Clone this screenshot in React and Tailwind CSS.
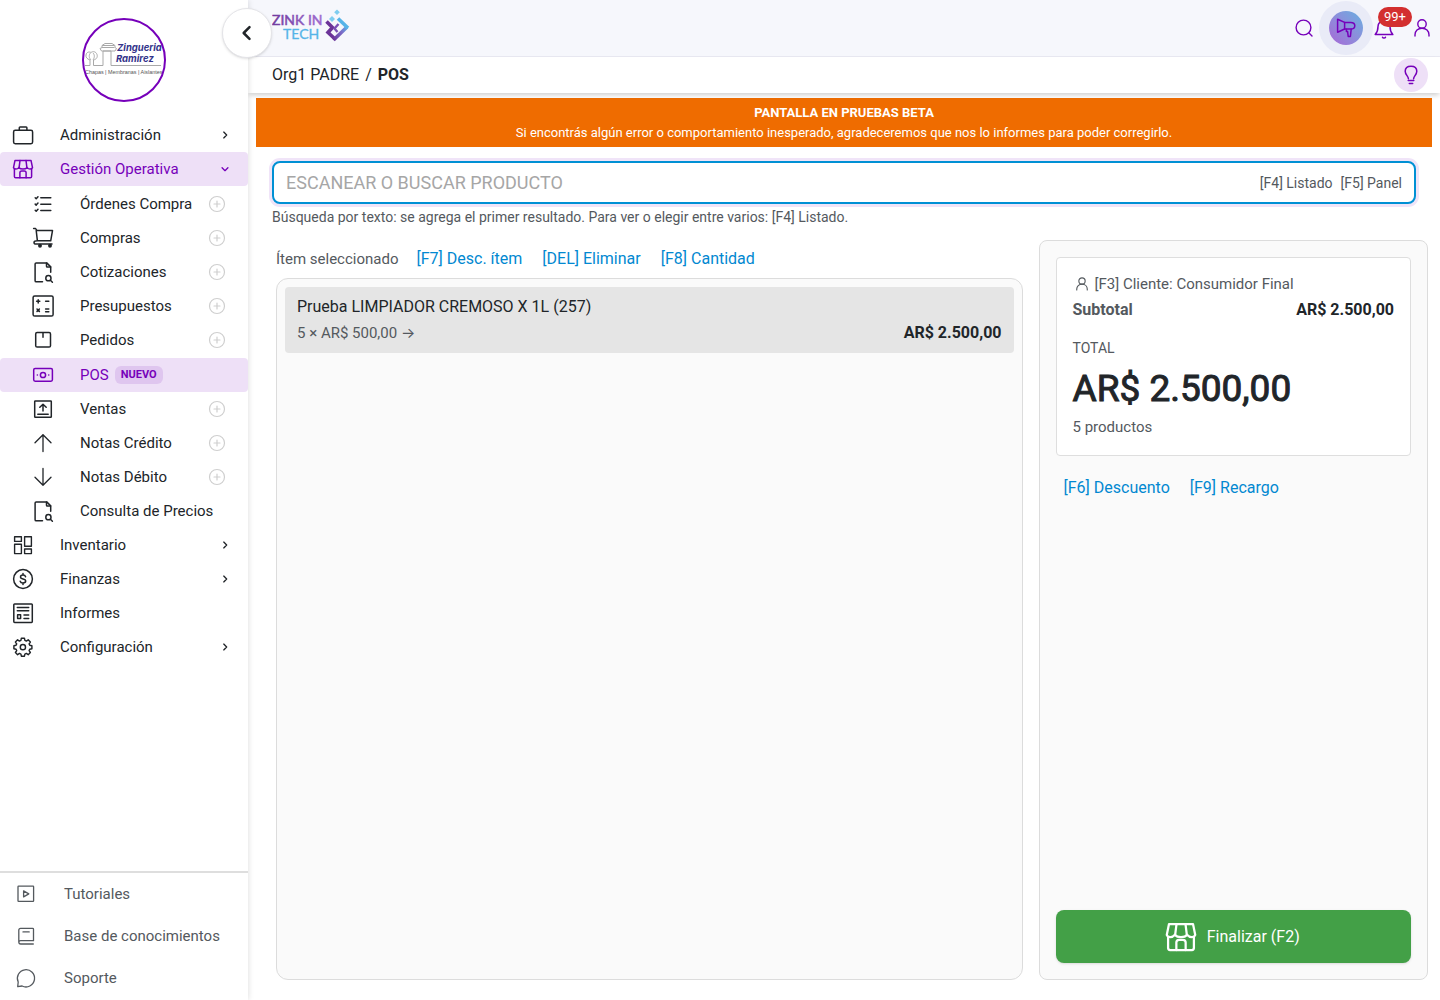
import { useState } from "react";
import clsx from "clsx";

const Svg = ({ className = "size-6", sw = 1.5, children }) => (
  <svg
    viewBox="0 0 24 24"
    className={clsx("shrink-0", className)}
    fill="none"
    stroke="currentColor"
    strokeWidth={sw}
    strokeLinecap="round"
    strokeLinejoin="round"
    aria-hidden="true"
  >
    {children}
  </svg>
);

const StoreIcon = (props) => (
  <Svg {...props}>
    <path d="M4 3.4h16l1.500 7.200c-.4 1-1.400 1.500-2.500 1.500s-2-.5-2.800-1.500c-1 1-2.600 1.500-4.200 1.500s-3.200-.5-4.200-1.500C7 11.600 6.100 12.100 5 12.100s-2.100-.5-2.500-1.500z" />
    <path d="m9 3.400-.9 7.200M15 3.400l.9 7.200" />
    <path d="M3.400 12v7.400c0 .8.5 1.300 1.300 1.300h14.600c.8 0 1.300-.5 1.300-1.300V12" />
    <path d="M8.900 20.700v-5c0-1.100.7-1.800 1.800-1.800h2.600c1.100 0 1.800.7 1.800 1.800v5" />
  </Svg>
);

const BriefcaseIcon = () => (
  <Svg>
    <rect x="2.6" y="7.3" width="19" height="13.4" rx="1.6" />
    <path d="M8.3 7.2V4.8c0-.5.3-.8.8-.8h6c.5 0 .8.3.8.8v2.4" />
  </Svg>
);

const ChecklistIcon = () => (
  <Svg>
    <path d="M9.8 5.8h10M9.8 12.2h10M9.8 18.4h10M4.2 5.7l1 1 1.8-2M4.2 12.1l1 1 1.8-2M4.2 18.3l1 1 1.8-2" />
  </Svg>
);

const CartIcon = () => (
  <Svg>
    <path d="M2.6 2.6h2l1.5 2h15.4l-1.8 10.2H6.4L5.2 4.5M6.4 14.8c-2.4 0-3.4.5-3.4 1.6s.8 1.6 2 1.6h16" />
    <circle cx="9" cy="19.8" r="1.2" fill="currentColor" />
    <circle cx="19" cy="19.8" r="1.2" fill="currentColor" />
  </Svg>
);

const FileSearchIcon = () => (
  <Svg>
    <path d="M11.5 21.8H5.2c-.7 0-1.1-.4-1.1-1.1V4c0-.7.4-1.1 1.1-1.1h10.5l4 4v5.4" />
    <path d="M15.5 3v3.3c0 .5.3.8.8.8h3.3" />
    <circle cx="17.4" cy="18.2" r="2.6" />
    <path d="m19.4 20.2 2 2" />
  </Svg>
);

const CalcIcon = () => (
  <Svg>
    <rect x="2.1" y="1.9" width="20" height="20.2" rx="1.6" />
    <path d="M5.6 7.3h3.2M7.2 5.7v3.2M14.6 7.3h3.2M6 15l2.4 2.4M8.4 15 6 17.4M14.6 15h3.2M14.6 17.7h3.2" />
  </Svg>
);

const BoxIcon = () => (
  <Svg>
    <rect x="4.7" y="4.5" width="14.8" height="14.6" rx="1.4" />
    <path d="M12 4.7v4.6" />
  </Svg>
);

const CashIcon = () => (
  <Svg>
    <rect x="2.7" y="5.6" width="18.7" height="12.6" rx="1.4" />
    <circle cx="12" cy="12" r="2.6" />
    <path d="M6.3 12h.1M17.7 12h.1" />
  </Svg>
);

const UploadBoxIcon = () => (
  <Svg>
    <rect x="3.7" y="3.9" width="16.6" height="16.4" rx=".6" />
    <path d="M12 14V7.3M8.8 10.3 12 7.2l3.2 3.1M6.8 17.2h10.4" />
  </Svg>
);

const ArrowUpIcon = () => (
  <Svg sw={1.3}>
    <path d="M12 20.5V3.7M4 11.8l8-8.1 8 8.1" />
  </Svg>
);

const ArrowDownIcon = () => (
  <Svg sw={1.3}>
    <path d="M12 3.5v16.8M4 12.2l8 8.1 8-8.1" />
  </Svg>
);

const DashboardIcon = () => (
  <Svg sw={1.4}>
    <rect x="3.6" y="3.8" width="6.8" height="4.6" />
    <rect x="3.6" y="11.2" width="6.8" height="9.4" />
    <rect x="13.6" y="3.8" width="6.8" height="9.4" />
    <rect x="13.6" y="16" width="6.8" height="4.6" />
  </Svg>
);

const DollarIcon = () => (
  <Svg>
    <circle cx="12" cy="12" r="9.4" />
    <path d="M12 6.4v1.5M12 16.1v1.5M14.6 9.7c-.3-1.1-1.2-1.7-2.6-1.7-1.5 0-2.5.7-2.5 1.9 0 2.9 5.2 1.2 5.2 4.2 0 1.2-1.1 1.9-2.7 1.9-1.5 0-2.5-.6-2.8-1.8" />
  </Svg>
);

const ReportIcon = () => (
  <Svg>
    <rect x="2.8" y="2.9" width="18.5" height="18.5" rx=".8" />
    <path d="M6.3 6.5h11.4M6.3 9.7h11.4M13 14h4.7M13 17.6h4.7" />
    <rect x="6.6" y="13.8" width="3" height="3.8" />
  </Svg>
);

const GearIcon = () => (
  <Svg sw={1.6}>
    <g transform="translate(1.1 .5) scale(.9)">
      <path d="M10.3 3h3.4l.5 2.5 1.6.7 2.1-1.4 2.4 2.4-1.4 2.1.7 1.6 2.4.4v3.4l-2.4.5-.7 1.6 1.4 2.1-2.4 2.4-2.1-1.4-1.6.7-.5 2.4h-3.4l-.5-2.4-1.6-.7-2.1 1.4-2.4-2.4 1.4-2.1-.7-1.6-2.4-.5v-3.4l2.4-.4.7-1.6-1.4-2.1 2.4-2.4 2.1 1.4 1.6-.7z" />
      <circle cx="12" cy="13" r="2.9" />
    </g>
  </Svg>
);

const PlayBoxIcon = () => (
  <Svg sw={1.3}>
    <rect x="4" y="4.2" width="15.6" height="15.2" rx=".6" />
    <path d="M9.6 8.9v6l5.2-3z" />
  </Svg>
);

const BookIcon = () => (
  <Svg sw={1.3}>
    <path d="M19.5 16.7V5.2c0-.5-.3-.8-.8-.8H6.6c-1.2 0-1.8.7-1.8 1.8v11.9c0 1.2.7 1.9 1.9 1.9h12.6M4.8 18c.2-.9.8-1.3 1.8-1.3h12.9M9 7.9h6.2" />
  </Svg>
);

const ChatIcon = () => (
  <Svg sw={1.3}>
    <path d="M3.7 20.7 4.2 16A8.6 8.6 0 1 1 8.1 20z" />
  </Svg>
);

const UserIcon = (props) => (
  <Svg {...props}>
    <circle cx="12" cy="8" r="4.2" />
    <path d="M5 20v-1.2c0-3.7 2.9-6.6 7-6.6s7 2.9 7 6.6V20" />
  </Svg>
);

const SearchIcon = () => (
  <Svg sw={1.4}>
    <circle cx="11.5" cy="11.5" r="7.4" />
    <path d="m17 17 3 3" />
  </Svg>
);

const MegaphoneIcon = () => (
  <Svg sw={1.5}>
    <path d="M3.6 3.2v13l7-3.2V6.4z" />
    <path d="M10.6 6.4h6.2c2.4 0 4 1.3 4 3.3s-1.600 3.300-4 3.300h-6.200" />
    <path d="M12.400 13.200v2.400h1.200l.6 4.800h2.200l.8-7.200" />
  </Svg>
);

const BellIcon = () => (
  <Svg sw={1.5}>
    <path d="M6 10.400a6 6 0 0 1 12 0c0 3.400.4 5.400 2.800 8.200H3.200C5.600 15.800 6 13.800 6 10.400zM10.500 21.200c.2.500.7.700 1.500.7s1.300-.2 1.500-.7" />
  </Svg>
);

const BulbIcon = () => (
  <Svg sw={1.5}>
    <path d="M9.400 15.800c0-2.600-3.200-4-3.200-7.600 0-3.300 2.400-5 5.800-5s5.800 1.700 5.800 5c0 3.600-3.200 5-3.200 7.600M9.200 17.600h5.600M10.300 20.400h3.400" />
  </Svg>
);

const ChevronIcon = ({ className, sw = 3.2, d = "m9 5 7 7-7 7" }) => (
  <Svg className={className} sw={sw}>
    <path d={d} />
  </Svg>
);

const PlusCircleIcon = () => (
  <Svg className="size-[18px]" sw={1.6}>
    <circle cx="12" cy="12" r="10" />
    <path d="M12 8v8M8 12h8" />
  </Svg>
);

const CompanyLogo = () => (
  <svg viewBox="0 0 84 84" className="size-[84px]" role="img" aria-label="Zingueria Ramirez">
    <defs>
      <clipPath id="logoClip">
        <circle cx="42" cy="42" r="41" />
      </clipPath>
    </defs>
    <g clipPath="url(#logoClip)">
      <g fill="none" stroke="#a9a9a9" strokeWidth="1">
        <path d="M3 47.5h5V42c-3-1-4.500-3-4-5 .5-3 3-3.500 5-2.500 2-1.500 5-1 6 2 1 3-1 5-3.500 5.500v5.500H21V33h8v14.500h50M8.500 35c-2 2-1.500 5 .5 7M11 35c2 2 1.500 5 0 7" />
        <path d="M19.500 33 18 30.500l2-1v-2l3-2h7l3 2v2l1.500 1-1.500 2.500zM20 29.500h12.500M20 27.500h12.500" />
      </g>
      <g
        fontFamily="Inter, 'Liberation Sans', sans-serif"
        fontWeight="700"
        fontStyle="italic"
        fontSize="9.5"
        fill="#33338a"
      >
        <text x="35" y="33">Zingueria</text>
        <text x="34" y="44">Ramirez</text>
      </g>
      <text x="3" y="56" fontFamily="'Liberation Sans', sans-serif" fontSize="5.4" fill="#555">
        Chapas | Membranas | Aislantes
      </text>
    </g>
    <circle cx="42" cy="42" r="41" fill="none" stroke="#7600ba" strokeWidth="2" />
  </svg>
);

const BrandLogo = () => (
  <svg viewBox="0 0 80 34" className="h-[34px] w-20" role="img" aria-label="Zink in Tech">
    <defs>
      <linearGradient id="brandText" gradientUnits="userSpaceOnUse" x1="0" x2="50">
        <stop offset="0" stopColor="#6f3a9e" />
        <stop offset="1" stopColor="#a06bd0" />
      </linearGradient>
      <linearGradient id="brandMark" gradientUnits="userSpaceOnUse" x1="60" y1="30" x2="75" y2="17">
        <stop offset="0" stopColor="#6b3398" />
        <stop offset="0.6" stopColor="#7b6cc8" />
        <stop offset="1" stopColor="#55b4e8" />
      </linearGradient>
    </defs>
    <g fontFamily="Lato, sans-serif" fontSize="14">
      <text x="0" y="15.5" fill="url(#brandText)" stroke="url(#brandText)" strokeWidth="0.5">ZINK IN</text>
      <text x="11" y="30" fill="#55b4e8" stroke="#55b4e8" strokeWidth="0.3">TECH</text>
    </g>
    <g fill="none" strokeWidth="3.6">
      <path d="m54.500 12.500 6 6-4.500 5 7 6.500" stroke="#6b3398" />
      <path d="m61.500 31 13.500-13" stroke="url(#brandMark)" />
      <path d="m66 9.500 10 9.500" stroke="#55b4e8" />
      <path d="m66.500 15-4 4.500 3 3.500" stroke="#7b4fb5" strokeWidth="2.4" />
    </g>
    <g fill="#7fcdf0">
      <path d="m65 .5 2.800 2.800L65 6.100l-2.800-2.800z" />
      <path d="m60 7 3 3-3 3-3-3z" />
    </g>
  </svg>
);

const subItems = [
  { label: "Órdenes Compra", icon: ChecklistIcon, add: true },
  { label: "Compras", icon: CartIcon, add: true },
  { label: "Cotizaciones", icon: FileSearchIcon, add: true },
  { label: "Presupuestos", icon: CalcIcon, add: true },
  { label: "Pedidos", icon: BoxIcon, add: true },
  { label: "POS", icon: CashIcon, active: true, badge: "NUEVO" },
  { label: "Ventas", icon: UploadBoxIcon, add: true },
  { label: "Notas Crédito", icon: ArrowUpIcon, add: true },
  { label: "Notas Débito", icon: ArrowDownIcon, add: true },
  { label: "Consulta de Precios", icon: FileSearchIcon },
];

const menu = [
  { label: "Administración", icon: BriefcaseIcon, arrow: true },
  { label: "Gestión Operativa", icon: StoreIcon, arrow: true, items: subItems },
  { label: "Inventario", icon: DashboardIcon, arrow: true },
  { label: "Finanzas", icon: DollarIcon, arrow: true },
  { label: "Informes", icon: ReportIcon },
  { label: "Configuración", icon: GearIcon, arrow: true },
];

const helpLinks = [
  { label: "Tutoriales", icon: PlayBoxIcon },
  { label: "Base de conocimientos", icon: BookIcon },
  { label: "Soporte", icon: ChatIcon },
];

const SubItem = ({ item }) => (
  <li
    className={clsx(
      "flex h-[34px] items-center rounded pr-[22px]",
      item.active && "mt-px bg-[#eee0f7] text-[#7600ba]"
    )}
  >
    <a href="#" className="flex flex-1 items-center pl-[31px] whitespace-nowrap">
      <item.icon />
      <span className="ml-[25px]">{item.label}</span>
      {item.badge && (
        <span className="ml-1.5 rounded-md bg-[#dfc6ef] px-1.5 text-[11px] leading-[18px] font-bold">
          {item.badge}
        </span>
      )}
    </a>
    {item.add && (
      <button type="button" aria-label={`Agregar ${item.label}`} className="text-[#cfcfcf]">
        <PlusCircleIcon />
      </button>
    )}
  </li>
);

const Sidebar = ({ onToggle }) => {
  const [open, setOpen] = useState("Gestión Operativa");

  return (
    <aside className="relative z-20 flex w-[248px] shrink-0 flex-col bg-white shadow-[0_0_6px_rgba(0,0,0,0.15)]">
      <div className="flex justify-center pt-[18px] pb-4">
        <CompanyLogo />
      </div>
      <button
        type="button"
        aria-label="Contraer menú"
        onClick={onToggle}
        className="absolute top-2 -right-6 flex size-[50px] items-center justify-center rounded-full border border-[#e4e4e8] bg-white shadow-sm"
      >
        <ChevronIcon className="size-5" sw={3} d="m15 5-7 7 7 7" />
      </button>

      <nav className="flex-1 text-[15px]">
        <ul>
          {menu.map((item) => {
            const isOpen = open === item.label && item.items;
            return (
              <li key={item.label}>
                <button
                  type="button"
                  onClick={() => setOpen(isOpen ? "" : item.label)}
                  className={clsx(
                    "flex h-[34px] w-full items-center rounded pr-[18px] pl-[11px]",
                    isOpen && "bg-[#eee0f7] text-[#7600ba]"
                  )}
                >
                  <item.icon />
                  <span className="ml-[25px] flex-1 text-left">{item.label}</span>
                  {item.arrow && (
                    <ChevronIcon className="size-2.5" d={isOpen ? "m5 9 7 7 7-7" : "m9 5 7 7-7 7"} />
                  )}
                </button>
                {isOpen && (
                  <ul className="pt-px">
                    {item.items.map((sub) => (
                      <SubItem key={sub.label} item={sub} />
                    ))}
                  </ul>
                )}
              </li>
            );
          })}
        </ul>
      </nav>

      <ul className="border-t-2 border-[#dedede] pb-px text-[15px] text-[#54595e]">
        {helpLinks.map((link) => (
          <li key={link.label}>
            <a href="#" className="flex h-[42px] items-center pl-3.5">
              <link.icon />
              <span className="ml-[26px]">{link.label}</span>
            </a>
          </li>
        ))}
      </ul>
    </aside>
  );
};

const TopBar = () => (
  <header className="flex h-[57px] items-center justify-between border-b border-[#e9e9f2] bg-[#f6f7fc] pr-1.5 pl-6">
    <a href="#" aria-label="Inicio" className="-mt-1">
      <BrandLogo />
    </a>
    <div className="flex items-center gap-3.5 text-[#7600ba]">
      <button type="button" aria-label="Buscar" className="mr-1">
        <SearchIcon />
      </button>
      <button
        type="button"
        aria-label="Novedades"
        className="-mx-[5px] flex size-[34px] items-center justify-center rounded-full bg-linear-to-tr from-[#a566d6] to-[#62afe0] shadow-[0_0_0_10px_#e9ebf7]"
      >
        <MegaphoneIcon />
      </button>
      <button type="button" aria-label="Notificaciones" className="relative">
        <BellIcon />
        <span className="absolute -top-[9px] left-1.5 rounded-full bg-[#d32f2f] px-1.5 text-[13px] leading-5 text-white">
          99+
        </span>
      </button>
      <button type="button" aria-label="Perfil">
        <UserIcon sw={1.4} />
      </button>
    </div>
  </header>
);

const Breadcrumb = () => (
  <div className="relative z-10 flex h-9 items-center justify-between bg-white pr-3 pl-6 shadow-[0_3px_5px_-1px_rgba(0,0,0,0.2)]">
    <nav aria-label="Ruta" className="flex gap-1.5">
      <a href="#">Org1 PADRE</a>
      <span>/</span>
      <span className="font-bold">POS</span>
    </nav>
    <button
      type="button"
      aria-label="Ayuda"
      className="flex size-[34px] items-center justify-center rounded-full bg-[#eee0f7] text-[#7600ba]"
    >
      <BulbIcon />
    </button>
  </div>
);

const LinkButton = ({ children }) => (
  <button type="button" className="text-base text-[#0288d1]">
    {children}
  </button>
);

const SearchBox = () => {
  const [query, setQuery] = useState("");

  return (
    <div className="px-4 pt-3.5">
      <div className="flex h-[43px] items-center rounded-lg border-2 border-[#0090d4] bg-white px-3 shadow-[0_0_0_3px_#f0e4f8]">
        <input
          type="text"
          aria-label="Escanear o buscar producto"
          placeholder="ESCANEAR O BUSCAR PRODUCTO"
          value={query}
          onChange={(e) => setQuery(e.target.value)}
          className="min-w-0 flex-1 text-lg outline-none placeholder:text-[#a6a6a6]"
        />
        <div className="flex gap-2 text-sm text-[#54595e]">
          <span>[F4] Listado</span>
          <span>[F5] Panel</span>
        </div>
      </div>
      <p className="mt-1 text-sm leading-[18px] text-[#54595e]">
        Búsqueda por texto: se agrega el primer resultado. Para ver o elegir entre varios: [F4] Listado.
      </p>
    </div>
  );
};

const ItemsPanel = () => (
  <section className="flex flex-col">
    <div className="flex h-[38px] items-center gap-5">
      <span className="-mr-0.5 text-[15px] text-[#54595e]">Ítem seleccionado</span>
      <LinkButton>[F7] Desc. ítem</LinkButton>
      <LinkButton>[DEL] Eliminar</LinkButton>
      <LinkButton>[F8] Cantidad</LinkButton>
    </div>
    <div className="flex-1 rounded-xl border border-[#dcdcdc] bg-[#fafafa] p-2">
      <div className="rounded-sm bg-[#e5e5e5] px-3 py-2">
        <p className="leading-6">Prueba LIMPIADOR CREMOSO X 1L (257)</p>
        <div className="mt-0.5 flex items-center justify-between leading-6">
          <span className="text-[15px] text-[#54595e]">
            5 × AR$ 500,00 <span className="font-['Inter',sans-serif]">→</span>
          </span>
          <span className="font-bold">AR$ 2.500,00</span>
        </div>
      </div>
    </div>
  </section>
);

const SummaryPanel = () => (
  <section className="flex flex-col rounded-lg border border-[#dcdcdc] bg-[#fafafa] p-4">
    <div className="rounded border border-[#dedede] bg-white p-4">
      <button type="button" className="flex h-5 items-center gap-1 text-[15px] text-[#54595e]">
        <UserIcon className="size-[18px]" />
        [F3] Cliente: Consumidor Final
      </button>
      <div className="mt-1 flex justify-between font-bold">
        <span className="text-[#54595e]">Subtotal</span>
        <span>AR$ 2.500,00</span>
      </div>
      <p className="mt-4 text-sm leading-5 text-[#54595e]">TOTAL</p>
      <p className="mt-2 text-[37px] leading-[46px] [-webkit-text-stroke:1px]">AR$ 2.500,00</p>
      <p className="mt-1 text-[15px] leading-[23px] text-[#54595e]">5 productos</p>
    </div>
    <div className="mt-5 flex gap-5 px-2">
      <LinkButton>[F6] Descuento</LinkButton>
      <LinkButton>[F9] Recargo</LinkButton>
    </div>
    <button
      type="button"
      className="mt-auto flex h-[53px] items-center justify-center gap-2 rounded-lg bg-[#43a047] pr-1 text-base text-white shadow-sm"
    >
      <StoreIcon className="size-9" />
      Finalizar (F2)
    </button>
  </section>
);

export default function App() {
  const [showMenu, setShowMenu] = useState(true);

  return (
    <div className="flex min-h-screen bg-white font-['Roboto',sans-serif] text-[#212529]">
      {showMenu && <Sidebar onToggle={() => setShowMenu(false)} />}
      <div className="flex min-w-0 flex-1 flex-col">
        <TopBar />
        <Breadcrumb />
        <main className="flex flex-1 flex-col px-2 pt-[5px] pb-5">
          <div className="bg-[#ef6c00] pt-[5px] pb-1 text-center text-[13px] leading-5 text-white">
            <p className="font-bold">PANTALLA EN PRUEBAS BETA</p>
            <p>Si encontrás algún error o comportamiento inesperado, agradeceremos que nos lo informes para poder corregirlo.</p>
          </div>
          <SearchBox />
          <div className="mt-3.5 grid flex-1 grid-cols-[23fr_12fr] gap-4 pr-1 pl-5">
            <ItemsPanel />
            <SummaryPanel />
          </div>
        </main>
      </div>
    </div>
  );
}
